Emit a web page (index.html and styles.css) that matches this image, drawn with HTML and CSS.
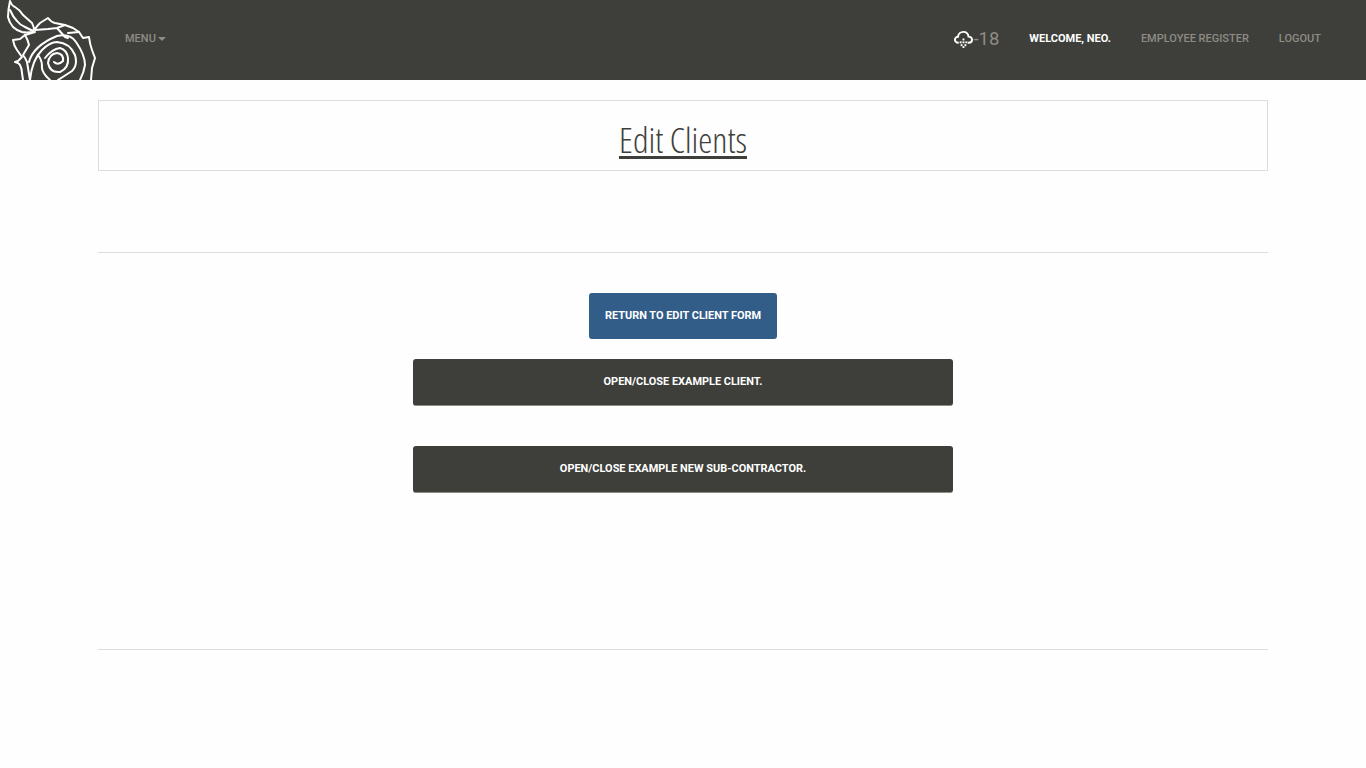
FILE: index.html
```html
<!DOCTYPE html>
<html lang="en">
<head>
  <meta charset="UTF-8">
  <meta name="viewport" content="width=device-width, initial-scale=1.0">
  <title>Edit Clients</title>
  <link rel="stylesheet" href="styles.css">
</head>
<body>
  <nav class="topbar">
    <div class="topbar-left">
      <a class="logo" href="#">
        <svg width="100" height="80" viewBox="0 0 100 80" fill="none" stroke="#fff" stroke-width="2" stroke-linejoin="round" stroke-linecap="round">
          <path d="M10 1Q12 6 15 7 20 10 23 15L32 23 34 28 33 32Q26 33 22 32 16 30 13 27 9 22 8 17 8 10 10 1Z"/>
          <path d="M10 10Q13 17 17 21 20 25 25 27L33 31"/>
          <path d="M35 29Q38 25 40 23L48 18Q51 22 55 23L65 25 73 28 79 32 83 38 89 37Q90 45 92 50L95 58 92 68 91 80"/>
          <path d="M35 32 25 35 20 39 13 40Q14 46 17 50L22 57 18 61 15 62Q19 63 20 65 22 69 22 73L23 80"/>
          <path d="M35 30 48 29 57 28 65 25M57 28 65 37 68 38M68 33 79 32"/>
          <path d="M25 35Q28 40 29 45L23 55Q26 59 27 62L30 80"/>
          <path d="M29 62Q33 46 57 36 70 33 76 42 85 55 85 65 84 72 80 80"/>
          <path d="M30 80Q32 60 42 50 50 42 57 42 70 43 75 55 78 65 72 71L58 80"/>
          <path d="M38 55Q42 60 42 66 41 72 50 80"/>
          <path d="M45 58Q52 49 60 48 67 50 68 58 69 68 60 72 50 73 48 63 49 54 57 53 64 54 63 61 58 66 54 62"/>
        </svg>
      </a>
      <a class="nav-link" href="#">MENU<span class="caret"></span></a>
    </div>
    <div class="topbar-right">
      <div class="weather">
        <svg width="20" height="20" viewBox="-1 0 21 21" fill="none">
          <path d="M5 14.500H4.500C2.500 14.500 1 13 1 11.300S2.500 8.200 4.200 8.200C4.600 5.200 7 3 9.800 3c3 0 5.200 2.200 5.500 5 2-.1 3.700 1.400 3.700 3.300s-1.500 3.200-3.500 3.200H14.500" stroke="#fff" stroke-width="2"/>
          <g fill="#fff">
            <rect x="9" y="10" width="2" height="2"/>
            <rect x="6" y="13" width="2" height="2"/>
            <rect x="9" y="13" width="2" height="2"/>
            <rect x="12" y="13" width="2" height="2"/>
            <rect x="7" y="16" width="2" height="2"/>
            <rect x="11" y="16" width="2" height="2"/>
            <rect x="9" y="18" width="2" height="2"/>
          </g>
        </svg>
        <span class="temp">-18</span>
      </div>
      <span class="nav-link welcome">WELCOME, NEO.</span>
      <a class="nav-link" href="#">EMPLOYEE REGISTER</a>
      <a class="nav-link" href="#">LOGOUT</a>
    </div>
  </nav>

  <main class="page">
    <div class="title-box">
      <h1>Edit Clients</h1>
    </div>
    <hr class="rule rule-top">
    <div class="actions">
      <a class="btn btn-blue" href="#">RETURN TO EDIT CLIENT FORM</a>
      <a class="btn btn-dark" href="#">OPEN/CLOSE EXAMPLE CLIENT.</a>
      <a class="btn btn-dark" href="#">OPEN/CLOSE EXAMPLE NEW SUB-CONTRACTOR.</a>
    </div>
    <hr class="rule rule-bottom">
  </main>
</body>
</html>
```

FILE: styles.css
```css
body {
  margin: 0;
  background-color: #fefefe;
  color: #3e3f3a;
  font-family: Roboto, sans-serif;
}
a {
  text-decoration: none;
}
.topbar {
  height: 80px;
  background-color: #3e3f3a;
  display: flex;
  justify-content: space-between;
  align-items: center;
}
.topbar-left {
  display: flex;
  align-items: center;
  height: 100%;
}
.topbar-right {
  display: flex;
  align-items: center;
  padding-right: 45px;
  padding-bottom: 2px;
}
.topbar-left .nav-link {
  padding-bottom: 2px;
}
.logo {
  display: block;
  width: 125px;
  height: 80px;
}
.nav-link {
  color: #8e8c84;
  font-size: 11px;
  font-weight: 500;
  line-height: 16px;
}
.caret {
  display: inline-block;
  margin-left: 2px;
  vertical-align: middle;
  border-top: 4px solid #8e8c84;
  border-left: 4px solid transparent;
  border-right: 4px solid transparent;
}
.weather {
  display: flex;
  align-items: center;
  margin-right: 30px;
}
.temp {
  color: #8e8c84;
  font-size: 18.500px;
  line-height: 20px;
}
.welcome {
  color: #fff;
  font-weight: 700;
  margin-right: 30px;
}
.topbar-right .nav-link + .nav-link {
  margin-right: 30px;
}
.topbar-right .nav-link:last-child {
  margin-right: 0;
}
.page {
  width: 1170px;
  margin: 20px auto 0;
}
.title-box {
  height: 69px;
  border: 1px solid #ddd;
  text-align: center;
}
h1 {
  display: inline-block;
  margin: 25px 0 0;
  padding-bottom: 4px;
  font-family: "Open Sans", sans-serif;
  font-size: 35.500px;
  font-weight: 300;
  font-stretch: condensed;
  line-height: 26px;
  border-bottom: 3px solid #3e3f3a;
}
.rule {
  height: 1px;
  margin: 0;
  border: none;
  background-color: #ddd;
}
.rule-top {
  margin-top: 81px;
}
.rule-bottom {
  margin-top: 116px;
}
.actions {
  display: flex;
  flex-direction: column;
  align-items: center;
  margin-top: 40px;
}
.btn {
  display: flex;
  align-items: center;
  justify-content: center;
  box-sizing: border-box;
  border-radius: 3px;
  color: #fff;
  font-size: 10.950px;
  font-weight: 700;
}
.btn-blue {
  width: 188px;
  height: 46px;
  margin-bottom: 20px;
  padding-bottom: 2px;
  background-color: #325d88;
}
.btn-dark {
  width: 540px;
  height: 47px;
  margin-bottom: 40px;
  padding-bottom: 2px;
  background-color: #3e3f3a;
  border-bottom: 1px solid #8e8c84;
}
```
